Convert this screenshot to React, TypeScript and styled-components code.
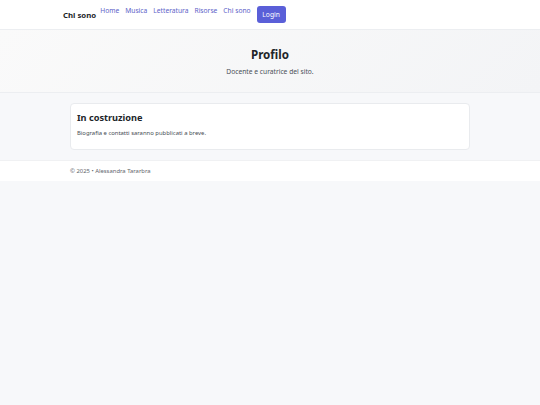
import React from "react";
import styled, { createGlobalStyle } from "styled-components";

const Global = createGlobalStyle`
  html, body { margin: 0; padding: 0; background: #f7f8fa; }
  body { font-family: "Noto Sans", "Open Sans", sans-serif; color: #212529; }
  * { box-sizing: border-box; }
`;

const Header = styled.header`
  background: #ffffff;
  border-bottom: 1px solid #eceef1;
  height: 30px;
`;

const HeaderInner = styled.div`
  width: 414px;
  margin: 0 auto;
  display: flex;
  align-items: flex-start;
  height: 100%;
`;

const Brand = styled.a`
  font-weight: 700;
  font-size: 7.8px;
  line-height: 11px;
  color: #212529;
  text-decoration: none;
  margin-top: 9.5px;
  margin-right: 4px;
`;

const Nav = styled.nav`
  display: flex;
  align-items: flex-start;
  gap: 6px;
  margin-top: 5.5px;
`;

const NavLink = styled.a`
  font-size: 6.7px;
  color: #5d62c8;
  text-decoration: none;
  line-height: 10px;
`;

const LoginButton = styled.button`
  margin-top: 0.5px;
  background: #5a5fd8;
  color: #fff;
  border: none;
  border-radius: 3px;
  font-family: inherit;
  font-size: 6.7px;
  padding: 0;
  width: 29px;
  height: 17px;
`;

const Hero = styled.section`
  background: linear-gradient(135deg, #fafafa 0%, #f3f4f6 100%);
  border-bottom: 1px solid #eceef1;
  height: 63px;
  display: flex;
  flex-direction: column;
  align-items: center;
  padding-top: 17px;
`;

const HeroTitle = styled.h1`
  margin: 0;
  font-size: 11.6px;
  font-weight: 700;
  line-height: 16px;
  color: #212529;
`;

const HeroSub = styled.p`
  margin: 4px 0 0;
  font-size: 6.7px;
  line-height: 10px;
  color: #4a5057;
`;

const Main = styled.main`
  width: 400px;
  margin: 0 auto;
  padding: 10px 0 10px;
`;

const Card = styled.div`
  background: #fff;
  border: 1px solid #e9ebee;
  border-radius: 4px;
  padding: 7px 6px 11px;
  height: 47px;
`;

const CardTitle = styled.h2`
  margin: 0;
  font-size: 9.2px;
  font-weight: 700;
  line-height: 13px;
  color: #212529;
`;

const CardText = styled.p`
  margin: 5px 0 0;
  font-size: 5.9px;
  line-height: 9px;
  color: #464c53;
`;

const Footer = styled.footer`
  background: #fff;
  border-top: 1px solid #f0f1f3;
  height: 21px;
`;

const FooterInner = styled.div`
  width: 400px;
  margin: 0 auto;
  font-size: 5.9px;
  color: #5f666d;
  line-height: 20px;
`;

export default function App() {
  return (
    <>
      <Global />
      <Header>
        <HeaderInner>
          <Brand href="#">Chi sono</Brand>
          <Nav>
            <NavLink href="#">Home</NavLink>
            <NavLink href="#">Musica</NavLink>
            <NavLink href="#">Letteratura</NavLink>
            <NavLink href="#">Risorse</NavLink>
            <NavLink href="#">Chi sono</NavLink>
            <LoginButton>Login</LoginButton>
          </Nav>
        </HeaderInner>
      </Header>
      <Hero>
        <HeroTitle>Profilo</HeroTitle>
        <HeroSub>Docente e curatrice del sito.</HeroSub>
      </Hero>
      <Main>
        <Card>
          <CardTitle>In costruzione</CardTitle>
          <CardText>Biografia e contatti saranno pubblicati a breve.</CardText>
        </Card>
      </Main>
      <Footer>
        <FooterInner>© 2025 • Alessandra Tararbra</FooterInner>
      </Footer>
    </>
  );
}
